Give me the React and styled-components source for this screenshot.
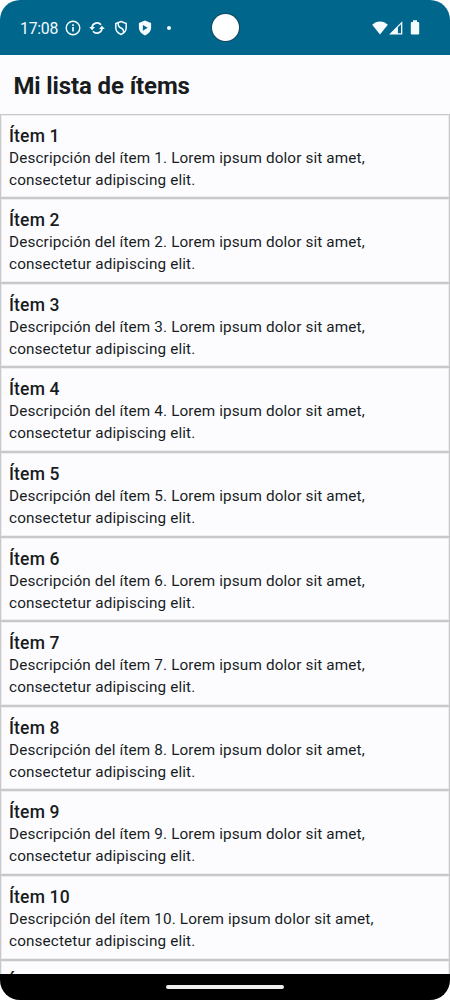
import React from 'react';
import styled, { createGlobalStyle } from 'styled-components';

const items = Array.from({ length: 11 }, (_, i) => ({
    id: i + 1,
    title: `Ítem ${i + 1}`,
    description: `Descripción del ítem ${i + 1}. Lorem ipsum dolor sit amet, consectetur adipiscing elit.`,
}));

const InfoIcon = () => (
    <svg width="16" height="16" viewBox="0 0 16 16" fill="none" stroke="currentColor">
        <circle cx="8" cy="8" r="6.8" strokeWidth="1.4" />
        <path d="M8 7v4.6M8 4.3v1.6" strokeWidth="1.7" />
    </svg>
);

const SyncIcon = () => (
    <svg width="16" height="16" viewBox="0 0 16 16">
        <path d="M3 7.4A5.1 5.1 0 0 1 12 4.8M13 8.6A5.1 5.1 0 0 1 4 11.2" fill="none" stroke="currentColor" strokeWidth="1.7" />
        <path d="M0.2 7h5.8L3.1 10.300zM15.800 9h-5.800L12.900 5.700z" fill="currentColor" />
    </svg>
);

const ShieldIcon = () => (
    <svg width="14" height="16" viewBox="0 0 14 16" fill="none" stroke="currentColor" strokeWidth="1.5">
        <path d="M7 1.5l5.2 2v4.1c0 3.2-2.2 5.7-5.2 6.9c-3-1.2-5.2-3.7-5.2-6.9V3.5z" />
        <path d="M4.3 2.8c-.6 3 .6 4.2 2.7 5.2s3.1 2.6 2.4 5" />
    </svg>
);

const PlayShieldIcon = () => (
    <svg width="14" height="16" viewBox="0 0 14 16">
        <path d="M7 .6l6.1 2.4v4.6c0 3.7-2.6 6.5-6.1 7.8C3.5 14.1.9 11.3.9 7.6V3z" fill="currentColor" />
        <path d="M4.9 4.9v5.8l4.8-2.9z" fill="#00668b" />
    </svg>
);

const WifiIcon = () => (
    <svg width="16" height="14" viewBox="0 0 16 14">
        <path d="M8 13.6L.2 3.8C2.3 1.6 5 .4 8 .4s5.7 1.2 7.8 3.4z" fill="currentColor" />
    </svg>
);

const SignalIcon = () => (
    <svg width="14" height="14" viewBox="0 0 14 14">
        <path d="M13.3 .2v13.4H.1z" fill="currentColor" />
        <path d="M8.900 6.200L12 3.300v9H8.900z" fill="#00668b" />
    </svg>
);

const BatteryIcon = () => (
    <svg width="10" height="15" viewBox="0 0 10 15">
        <path d="M3 .3h4v1.6h1.2q1 0 1 1v10.6q0 1-1 1H1.8q-1 0-1-1V2.9q0-1 1-1H3z" fill="currentColor" />
    </svg>
);

export default () => (
    <>
        <GlobalStyle />
        <Phone>
            <StatusBar>
                <Clock>17:08</Clock>
                <Notifications>
                    <InfoIcon />
                    <SyncIcon />
                    <ShieldIcon />
                    <PlayShieldIcon />
                    <Dot />
                </Notifications>
                <Camera />
                <SystemIcons>
                    <WifiIcon />
                    <SignalIcon />
                    <BatteryIcon />
                </SystemIcons>
            </StatusBar>
            <Header>Mi lista de ítems</Header>
            <List>
                {items.map(item => (
                    <Item key={item.id}>
                        <ItemTitle>{item.title}</ItemTitle>
                        <ItemText>{item.description}</ItemText>
                    </Item>
                ))}
            </List>
            <NavBar>
                <Handle />
            </NavBar>
        </Phone>
    </>
);

const GlobalStyle = createGlobalStyle`
    *{box-sizing: border-box;}
    body{
        margin: 0;
        background-color: #fff;
        font-family: Roboto, sans-serif;
        color: #191c1e;
    }
    h1, h2, p{margin: 0;}
    svg{display: block; flex: none;}
`;
const Phone = styled.div`
    width: 450px; height: 1000px;
    display: flex;
    flex-direction: column;
    overflow: hidden;
    border-radius: 20px;
    background-color: #fcfcff;
`;
const StatusBar = styled.header`
    height: 55px;
    flex: none;
    display: flex;
    align-items: center;
    position: relative;
    padding: 0 30px 0 20px;
    background-color: #00668b;
    color: #f4fcff;
`;
const Clock = styled.span`
    width: 45px;
    font-size: 15.8px;
    letter-spacing: -0.25px;
    padding-top: 1px;
`;
const Notifications = styled.div`
    display: flex;
    align-items: center;
    gap: 8px;
    padding-top: 1px;
    svg:nth-child(3){margin-left: 1px;}
    svg:nth-child(4){margin-left: 2px;}
`;
const Dot = styled.i`
    width: 4px; height: 4px;
    margin-left: 7px;
    border-radius: 50%;
    background-color: currentColor;
`;
const Camera = styled.div`
    position: absolute;
    top: 14px; left: 212px;
    width: 27px; height: 27px;
    border-radius: 50%;
    background-color: #fff;
    box-shadow: 0 0 0 1px #14485d;
`;
const SystemIcons = styled.div`
    display: flex;
    align-items: center;
    margin-left: auto;
    gap: 2px;
    svg:first-child{margin-right: -1px;}
    svg:last-child{margin-left: 5px;}
`;
const Header = styled.h1`
    height: 58.6px;
    flex: none;
    padding: 14px 13.4px 0;
    font-size: 24px;
    line-height: 34px;
    font-weight: 700;
    letter-spacing: -0.12px;
`;
const List = styled.main`
    flex: 1;
    min-height: 0;
    overflow: hidden;
`;
const Item = styled.article`
    height: 84.6px;
    padding: 8px 8px 0;
    border: 1px solid #c8c8ca;
    box-shadow: inset 0 0 0 1px #ededf0;
`;
const ItemTitle = styled.h2`
    font-size: 17.5px;
    line-height: 26px;
    font-weight: 500;
    letter-spacing: 0.16px;
`;
const ItemText = styled.p`
    width: 400px;
    margin-top: -2px;
    font-size: 15.3px;
    line-height: 22px;
    letter-spacing: 0.13px;
`;
const NavBar = styled.footer`
    height: 26px;
    flex: none;
    display: flex;
    justify-content: center;
    align-items: center;
    background-color: #000;
`;
const Handle = styled.div`
    width: 118px; height: 4px;
    border-radius: 2px;
    background-color: #eee;
`;
